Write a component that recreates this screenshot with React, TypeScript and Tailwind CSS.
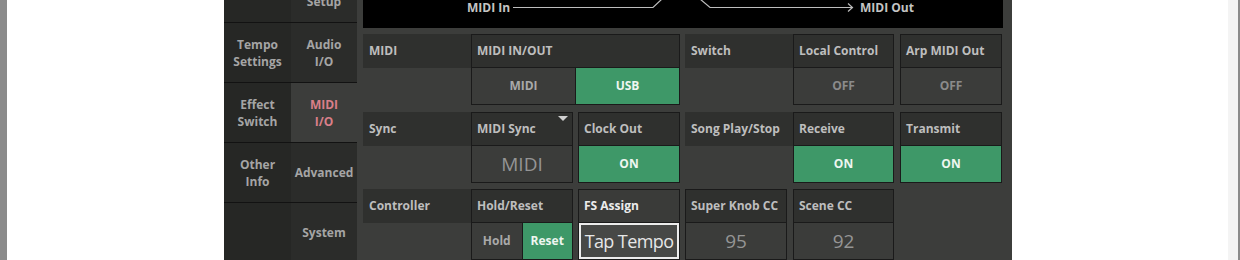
import type { ReactNode } from 'react';

type Tab = { lines: string[]; active?: boolean };

const colA: Tab[] = [
  { lines: [] },
  { lines: ['Tempo', 'Settings'] },
  { lines: ['Effect', 'Switch'] },
  { lines: ['Other', 'Info'] },
  { lines: [] }
];

const colB: Tab[] = [
  { lines: ['', 'Setup'] },
  { lines: ['Audio', 'I/O'] },
  { lines: ['MIDI', 'I/O'], active: true },
  { lines: ['Advanced'] },
  { lines: ['System'] }
];

function TabCell({ tab, first, bg }: { tab: Tab; first: boolean; bg: string }) {
  return (
    <div
      className={`flex h-[60px] shrink-0 flex-col items-center justify-center border-b border-[#121212] text-[12px] font-bold leading-[17px] ${
        first ? '-mt-[37px]' : ''
      } ${tab.active ? 'bg-[#3c3d3b] text-[#d97f89]' : `${bg} text-[#a5a5a5]`}`}
    >
      {tab.lines.map((l, i) => (
        <span key={i} className="h-[17px]">
          {l}
        </span>
      ))}
    </div>
  );
}

function Label({ children }: { children: ReactNode }) {
  return (
    <div className="flex h-[34px] w-[108px] shrink-0 items-center bg-[#2f302e] pl-[6px] text-[12px] font-bold text-[#bebebe]">
      {children}
    </div>
  );
}

function Box({
  title,
  w,
  children,
  dropdown = false,
  focused = false
}: {
  title: string;
  w: string;
  children: ReactNode;
  dropdown?: boolean;
  focused?: boolean;
}) {
  return (
    <div className={`flex shrink-0 flex-col border border-[#1a1a1a] ${w}`}>
      <div
        className={`flex h-[32px] items-center justify-between pl-[5px] pr-[4px] text-[12px] font-bold ${
          focused ? 'bg-[#3a3b39] text-[#ececec]' : 'bg-[#2f302e] text-[#bebebe]'
        }`}
      >
        <span className="whitespace-nowrap">{title}</span>
        {dropdown && (
          <svg width="10" height="6" viewBox="0 0 10 6" className="-mt-[20px]">
            <path d="M0 0 H10 L5 5 Z" fill="#d0d0d0" />
          </svg>
        )}
      </div>
      <div className="flex h-[37px] border-t border-[#1a1a1a]">{children}</div>
    </div>
  );
}

function Btn({ children, on = false, dim = false, divider = false }: { children: ReactNode; on?: boolean; dim?: boolean; divider?: boolean }) {
  return (
    <div
      className={`flex flex-1 items-center justify-center text-[12px] font-bold ${divider ? 'border-l border-[#1a1a1a]' : ''} ${
        on ? 'bg-[#3e9868] text-[#eef6f0]' : dim ? 'bg-[#3b3c3a] text-[#8b8b8b]' : 'bg-[#3b3c3a] text-[#a9a9a9]'
      }`}
    >
      {children}
    </div>
  );
}

function Value({ children }: { children: ReactNode }) {
  return (
    <div className="flex flex-1 items-center justify-center whitespace-nowrap bg-[#3b3c3a] text-[19px] text-[#959595]">
      {children}
    </div>
  );
}

export default function App() {
  return (
    <div className="flex h-[260px] w-[1240px] overflow-hidden bg-white font-['Open_Sans',sans-serif]">
      <div className="w-[7px] shrink-0 bg-[#8b8b8b]" />
      <div className="w-[217px] shrink-0 bg-white" />

      <div className="flex w-[788px] shrink-0 bg-[#3c3d3b]">
        <div className="flex w-[67px] shrink-0 flex-col bg-[#262725]">
          {colA.map((t, i) => (
            <TabCell key={i} tab={t} first={i === 0} bg="bg-[#262725]" />
          ))}
        </div>
        <div className="flex w-[66px] shrink-0 flex-col bg-[#2b2c2a]">
          {colB.map((t, i) => (
            <TabCell key={i} tab={t} first={i === 0} bg="bg-[#2b2c2a]" />
          ))}
        </div>

        <div className="flex flex-1 flex-col pl-[6px]">
          <div className="h-[29px] w-[640px] bg-black">
            <div className="flex items-start pl-[104px] text-[12px] font-bold leading-[16px] text-[#c4c4c4]">
              <span className="w-[40px] whitespace-nowrap">MIDI In</span>
              <svg width="353" height="16" viewBox="0 0 353 16" fill="none" stroke="#bdbdbd" strokeWidth="1.2">
                <path d="M6 7.5 H146 L155 -1" />
                <path d="M193 -1 L203 7.5 H345" />
                <path d="M341 3.5 L345.5 7.5 L341 11.5" />
              </svg>
              <span className="whitespace-nowrap">MIDI Out</span>
            </div>
          </div>

          <div className="mt-[6px] flex items-start">
            <Label>MIDI</Label>
            <Box title="MIDI IN/OUT" w="w-[209px]">
              <Btn>MIDI</Btn>
              <Btn on divider>
                USB
              </Btn>
            </Box>
            <div className="w-[5px] shrink-0" />
            <Label>Switch</Label>
            <Box title="Local Control" w="w-[101px]">
              <Btn dim>OFF</Btn>
            </Box>
            <div className="w-[6px] shrink-0" />
            <Box title="Arp MIDI Out" w="w-[102px]">
              <Btn dim>OFF</Btn>
            </Box>
          </div>

          <div className="mt-[7px] flex items-start">
            <Label>Sync</Label>
            <Box title="MIDI Sync" w="w-[102px]" dropdown>
              <Value>MIDI</Value>
            </Box>
            <div className="w-[5px] shrink-0" />
            <Box title="Clock Out" w="w-[102px]">
              <Btn on>ON</Btn>
            </Box>
            <div className="w-[5px] shrink-0" />
            <Label>Song Play/Stop</Label>
            <Box title="Receive" w="w-[101px]">
              <Btn on>ON</Btn>
            </Box>
            <div className="w-[6px] shrink-0" />
            <Box title="Transmit" w="w-[102px]">
              <Btn on>ON</Btn>
            </Box>
          </div>

          <div className="mt-[6px] flex items-start">
            <Label>Controller</Label>
            <Box title="Hold/Reset" w="w-[102px]">
              <Btn>Hold</Btn>
              <Btn on divider>
                Reset
              </Btn>
            </Box>
            <div className="w-[5px] shrink-0" />
            <Box title="FS Assign" w="w-[102px]" focused>
              <div className="flex flex-1 items-center justify-center whitespace-nowrap border-2 border-[#ececec] bg-[#474846] text-[18px] tracking-[-0.6px] text-[#e6e6e6]">
                Tap Tempo
              </div>
            </Box>
            <div className="w-[5px] shrink-0" />
            <Box title="Super Knob CC" w="w-[102px]">
              <Value>95</Value>
            </Box>
            <div className="w-[6px] shrink-0" />
            <Box title="Scene CC" w="w-[101px]">
              <Value>92</Value>
            </Box>
          </div>
        </div>
      </div>

      <div className="flex-1 bg-white" />
      <div className="w-[10px] shrink-0 bg-[#f4f4f4]" />
      <div className="w-[2px] shrink-0 bg-[#8b8b8b]" />
    </div>
  );
}
